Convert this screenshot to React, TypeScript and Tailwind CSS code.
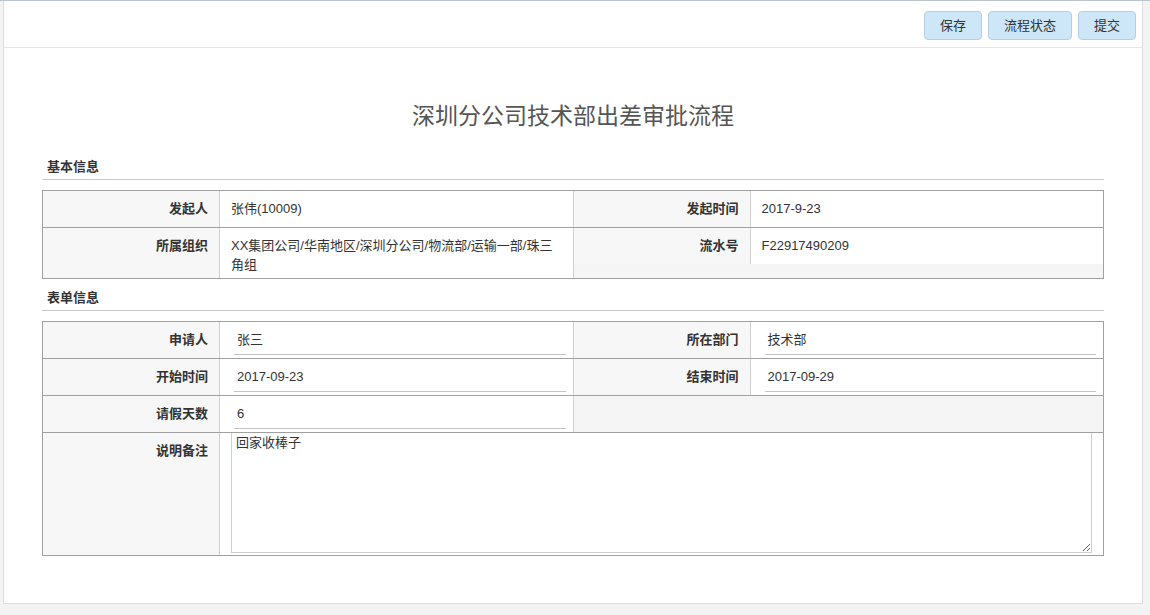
import React from "react";

const font = { fontFamily: '"Liberation Sans", "Noto Sans CJK SC", sans-serif' };

function Label({ children }: { children?: React.ReactNode }) {
  return (
    <div className="w-[177px] shrink-0 self-stretch bg-[#f7f7f7] border-r border-[#d0d0d0] pr-[11px] pt-[8px] text-right text-[13px] leading-[19px] font-bold text-[#333]">
      {children}
    </div>
  );
}

function InfoPair({ label, value }: { label: string; value: React.ReactNode }) {
  return (
    <div className="flex flex-1 items-stretch">
      <Label>{label}</Label>
      <div className="flex-1 bg-white min-h-[36px] pl-[11px] pr-[14px] pt-[8px] pb-[4px] text-[13px] leading-[19px] text-[#333]">
        {value}
      </div>
    </div>
  );
}

function InputPair({ label, value }: { label: string; value: string }) {
  return (
    <div className="flex flex-1 h-[36px] border-r border-[#d0d0d0] last:border-r-0">
      <Label>{label}</Label>
      <div className="flex-1 bg-white pl-[14px] pr-[7px] pt-[6px]">
        <div className="h-[27px] border-b border-[#c4c4c4] pl-[3px] pb-[3px] flex items-center text-[13px] text-[#333]">
          {value}
        </div>
      </div>
    </div>
  );
}

function Section({ title }: { title: string }) {
  return (
    <div className="border-b border-[#c8c8c8] pl-[5px] pb-[3px] text-[13px] leading-[19px] font-bold text-[#333]">
      {title}
    </div>
  );
}

export default function App() {
  return (
    <div className="w-[1150px] h-[615px] bg-[#f3f3f3] border-t border-[#b9c4cf] overflow-hidden" style={font}>
      <div className="ml-[3px] mr-[7px] h-[603px] bg-white border-x border-b border-[#dedede] flex flex-col">
        {/* toolbar */}
        <div className="h-[47px] border-b border-[#e6e6e6] flex items-start justify-end gap-[6px] pt-[10px] pr-[6px]">
          {["保存", "流程状态", "提交"].map((t) => (
            <button
              key={t}
              className="h-[29px] px-[15px] rounded-[4px] bg-[#cde6f8] border border-[#b3cfe4] text-[13px] text-[#333]"
            >
              {t}
            </button>
          ))}
        </div>

        <div className="px-[38px]">
          <h1 className="text-center text-[23px] leading-[32px] text-[#555] mt-[52px] mb-[25px]">
            深圳分公司技术部出差审批流程
          </h1>

          <Section title="基本信息" />
          <div className="mt-[10px] border border-[#a0a0a0] bg-[#f5f5f5]">
            <div className="flex items-start border-b border-[#a0a0a0]">
              <div className="flex flex-1 border-r border-[#d0d0d0]">
                <InfoPair label="发起人" value="张伟(10009)" />
              </div>
              <div className="flex flex-1">
                <InfoPair label="发起时间" value="2017-9-23" />
              </div>
            </div>
            <div className="flex items-start">
              <div className="flex flex-1 border-r border-[#d0d0d0]">
                <InfoPair label="所属组织" value="XX集团公司/华南地区/深圳分公司/物流部/运输一部/珠三角组" />
              </div>
              <div className="flex flex-1">
                <InfoPair label="流水号" value="F22917490209" />
              </div>
            </div>
          </div>

          <div className="mt-[9px]">
            <Section title="表单信息" />
          </div>
          <div className="mt-[10px] border border-[#a0a0a0] bg-[#f5f5f5]">
            <div className="flex border-b border-[#a0a0a0]">
              <InputPair label="申请人" value="张三" />
              <InputPair label="所在部门" value="技术部" />
            </div>
            <div className="flex border-b border-[#a0a0a0]">
              <InputPair label="开始时间" value="2017-09-23" />
              <InputPair label="结束时间" value="2017-09-29" />
            </div>
            <div className="flex border-b border-[#a0a0a0]">
              <InputPair label="请假天数" value="6" />
              <div className="flex-1" />
            </div>
            <div className="flex h-[122px]">
              <Label>说明备注</Label>
              <div className="flex-1 bg-white pl-[11px] pr-[11px] pb-[2px]">
                <textarea
                  readOnly
                  defaultValue="回家收棒子"
                  className="w-full h-[120px] block border border-t-0 border-[#cfcfcf] px-[4px] pt-[1px] text-[13px] leading-[18px] text-[#333] outline-none"
                  style={font}
                />
              </div>
            </div>
          </div>
        </div>
      </div>
    </div>
  );
}
